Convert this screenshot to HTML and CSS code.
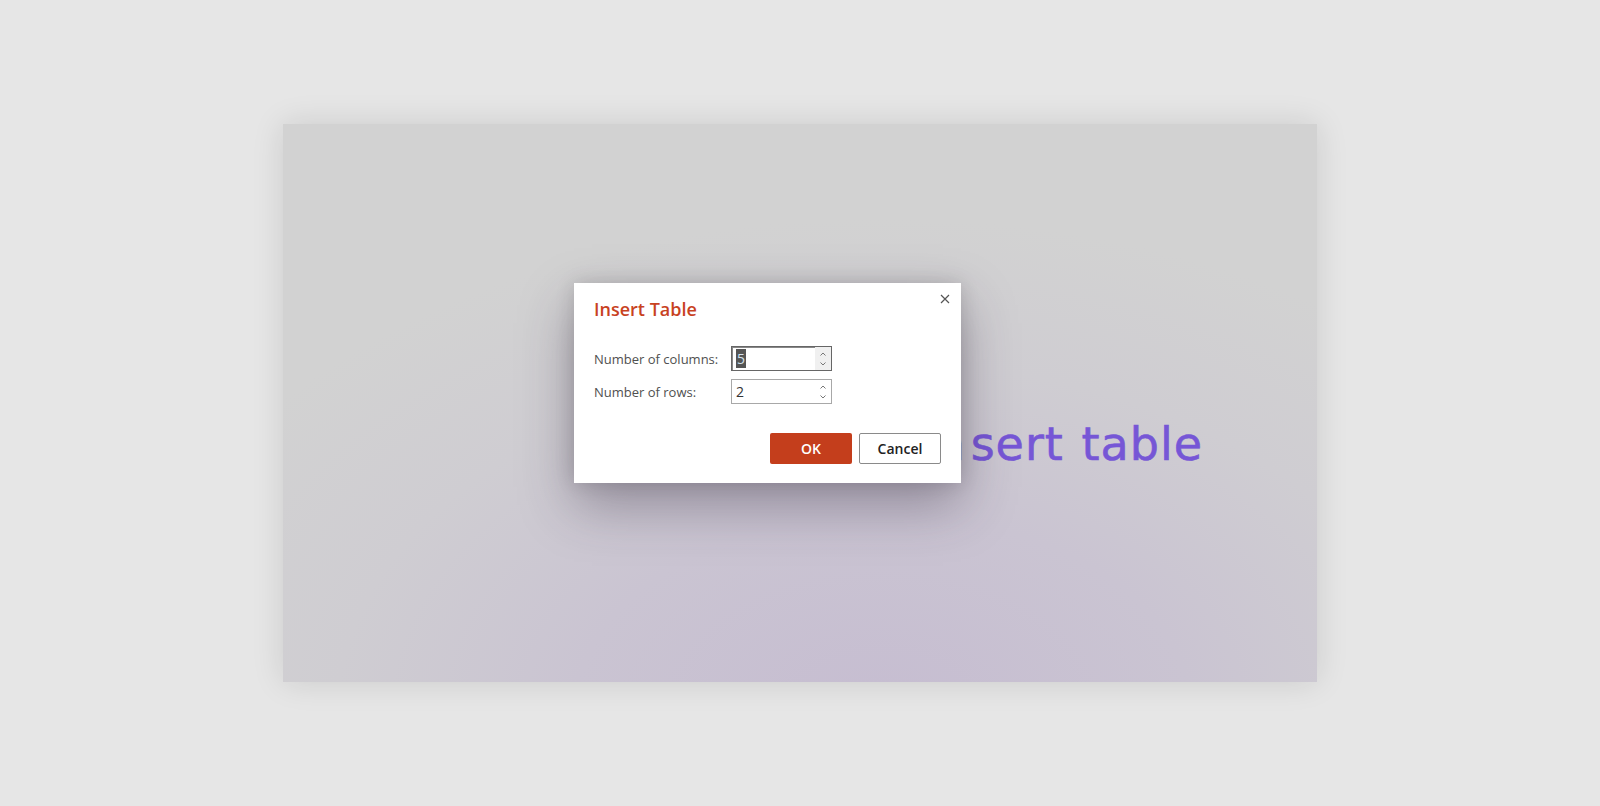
FILE: index.html
```html
<!DOCTYPE html>
<html>
<head>
  <title>Insert Table</title>
  <meta charset="UTF-8" />
  <link rel="stylesheet" href="styles.css">
</head>
<body>
  <div class="slide">
    <div class="slide-title"><span class="lead">In</span>sert table</div>

    <div class="dialog">
      <h2>Insert Table</h2>
      <span class="close">
        <svg width="10" height="10" viewBox="0 0 10 10"><path d="M1 1L9 9M9 1L1 9" stroke="#555" stroke-width="1.2" fill="none"/></svg>
      </span>

      <div class="form">
        <label>Number of columns:</label>
        <div class="numbox focused">
          <span class="val"><span class="sel">5</span></span>
          <span class="spin">
            <svg width="6" height="4" viewBox="0 0 6 4"><path d="M0.5 3.5L3 1L5.5 3.5" stroke="#777" fill="none"/></svg>
            <svg width="6" height="4" viewBox="0 0 6 4"><path d="M0.5 0.5L3 3L5.5 0.5" stroke="#777" fill="none"/></svg>
          </span>
        </div>

        <label>Number of rows:</label>
        <div class="numbox">
          <span class="val">2</span>
          <span class="spin plain">
            <svg width="6" height="4" viewBox="0 0 6 4"><path d="M0.5 3.5L3 1L5.5 3.5" stroke="#777" fill="none"/></svg>
            <svg width="6" height="4" viewBox="0 0 6 4"><path d="M0.5 0.5L3 3L5.5 0.5" stroke="#777" fill="none"/></svg>
          </span>
        </div>
      </div>

      <div class="buttons">
        <button class="ok">OK</button>
        <button class="cancel">Cancel</button>
      </div>
    </div>
  </div>
</body>
</html>
```

FILE: styles.css
```css
html, body {
  margin: 0;
  height: 100%;
}
body {
  background-color: #e6e6e6;
  display: flex;
  align-items: center;
  justify-content: center;
  font-family: "Segoe UI", "Open Sans", sans-serif;
}
.slide {
  position: relative;
  width: 1034px;
  height: 558px;
  background: radial-gradient(ellipse 85% 100% at 58% 105%, #c6bdd1 0%, #cac4d2 35%, #cfcdd2 62%, #d2d2d2 88%);
  box-shadow: 0 0 30px rgba(0, 0, 0, 0.12);
}
.slide-title {
  position: absolute;
  right: 114px;
  top: 297px;
  font-family: "DejaVu Sans", sans-serif;
  font-size: 46px;
  line-height: 46px;
  letter-spacing: 1px;
  word-spacing: 2px;
  color: #7656d6;
  -webkit-text-stroke: 0.6px #7656d6;
  white-space: nowrap;
}
.slide-title .lead {
  letter-spacing: 6px;
}
.dialog {
  position: absolute;
  left: 291px;
  top: 159px;
  width: 347px;
  padding: 14px 20px 19px;
  background: #fff;
  box-shadow: 0 22px 50px rgba(50, 40, 60, 0.38), 0 0 18px rgba(0, 0, 0, 0.14);
}
.dialog h2 {
  margin: 0;
  font-size: 18px;
  line-height: 24px;
  font-weight: 600;
  color: #c8421f;
}
.close {
  position: absolute;
  right: 11px;
  top: 11px;
  display: flex;
}
.form {
  margin-top: 25px;
  display: grid;
  grid-template-columns: 137px 101px;
  row-gap: 8px;
  align-items: center;
}
.form label {
  font-size: 13px;
  color: #505050;
}
.numbox {
  height: 25px;
  box-sizing: border-box;
  border: 1px solid #a8a8a8;
  display: flex;
  align-items: center;
  font-size: 14px;
  color: #333;
}
.numbox.focused {
  border-color: #666;
  box-shadow: inset 1px 1px 0 #888;
}
.val {
  flex: 1;
  padding-left: 4px;
}
.sel {
  background: #555;
  color: #d4e2ee;
  padding: 0 1px;
}
.spin {
  width: 16px;
  height: 100%;
  background: #f0f0f0;
  display: flex;
  flex-direction: column;
  align-items: center;
  justify-content: center;
  gap: 6px;
}
.spin.plain {
  background: #fff;
}
.buttons {
  margin-top: 29px;
  display: flex;
  justify-content: flex-end;
  gap: 7px;
}
.buttons button {
  width: 82px;
  height: 31px;
  font-family: "Segoe UI", "Open Sans", sans-serif;
  font-size: 14px;
  font-weight: 600;
  border-radius: 2px;
}
.ok {
  background: #c43e1c;
  border: none;
  color: #fff;
  font-weight: 700;
}
.cancel {
  background: #fff;
  border: 1px solid #8a8a8a;
  color: #222;
}
```
